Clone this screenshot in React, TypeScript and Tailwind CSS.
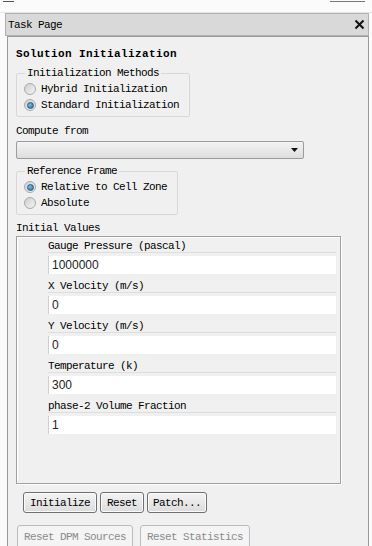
const mono = "font-['Liberation_Mono',monospace] text-[11px] leading-[12px] tracking-[-0.6px] text-black";

const Radio = ({ checked, label }: { checked?: boolean; label: string }) => (
    <div className="flex h-[16px] items-center gap-[5px] pl-[7px]">
        <span className="flex h-[12px] w-[12px] items-center justify-center rounded-full border border-[#a9a9a9] bg-[linear-gradient(135deg,#cfcfcf,#f4f4f4)]">
            {checked && (
                <span className="h-[7px] w-[7px] rounded-full border border-[#1f5f86] bg-[radial-gradient(circle_at_35%_35%,#7cc0e4,#1c6a9a)]" />
            )}
        </span>
        <span className={mono}>{label}</span>
    </div>
);

const Group = ({ title, width, children }: { title: string; width: string; children: React.ReactNode }) => (
    <fieldset className={`${width} rounded-[2px] border border-[#d8d8d8] pb-[3px] pt-[2px]`}>
        <legend className={`${mono} ml-[8px] px-[2px]`}>{title}</legend>
        {children}
    </fieldset>
);

const Field = ({ label, value }: { label: string; value: string }) => (
    <div className="flex flex-col">
        <div className={`${mono} h-[13px] border-b border-[#dedede]`}>{label}</div>
        <div className="mt-[3px] flex h-[18px] items-center border-l border-[#d0d0d0] bg-white pl-[3px] font-['Liberation_Sans',sans-serif] text-[12px] text-[#222]">
            {value}
        </div>
    </div>
);

const Btn = ({ text, width }: { text: string; width: string }) => (
    <button className={`${mono} ${width} h-[21px] rounded-[3px] border border-[#707070] bg-[linear-gradient(#f4f4f4,#dcdcdc)] shadow-[inset_0_0_0_1px_#fbfbfb]`}>
        {text}
    </button>
);

const DisabledBtn = ({ text, width }: { text: string; width: string }) => (
    <button className={`${mono} ${width} h-[24px] shrink-0 rounded-[3px] border border-[#b9bcbe] bg-[#f4f4f4] !text-[#8a8a8a]`}>
        {text}
    </button>
);

export default function App() {
    return (
        <div className="flex h-[546px] w-[372px] flex-col overflow-hidden bg-[#fbfbfb]">
            <div className="relative h-[13px] shrink-0 border-b border-[#e6e6e6]">
                <span className="absolute left-[3px] top-[1px] h-[1px] w-[11px] bg-[#555]" />
                <span className="absolute right-[7px] top-[1px] h-[1px] w-[35px] bg-[#777]" />
            </div>
            <div className="ml-[5px] flex w-[364px] flex-1 flex-col">
                <div className="flex h-[23px] shrink-0 items-center justify-between border border-[#b0b0b0] bg-[#d9d9d9] pl-[2px] pr-[3px]">
                    <span className={mono}>Task Page</span>
                    <svg width="11" height="11" viewBox="0 0 11 11">
                        <path d="M1.5 1.5 L9.5 9.5 M9.5 1.5 L1.5 9.5" stroke="#111" strokeWidth="2" />
                    </svg>
                </div>
                <div className="ml-[2px] flex flex-1 flex-col border-x border-t border-[#9a9a9a] bg-[#f0f0f0] pl-[8px] pt-[11px]">
                    <div className={`${mono} shrink-0 font-bold tracking-[0.4px]`}>Solution Initialization</div>
                    <div className="mt-[7px] shrink-0">
                        <Group title="Initialization Methods" width="w-[174px]">
                            <Radio label="Hybrid  Initialization" />
                            <Radio checked label="Standard Initialization" />
                        </Group>
                    </div>
                    <div className={`${mono} mt-[8px] shrink-0`}>Compute from</div>
                    <div className="mt-[4px] flex h-[18px] w-[288px] shrink-0 items-center justify-end rounded-[2px] border border-[#9c9c9c] bg-[linear-gradient(#f3f3f3,#dedede)] pr-[5px]">
                        <svg width="7" height="4" viewBox="0 0 7 4">
                            <path d="M0 0 H7 L3.5 4 Z" fill="#111" />
                        </svg>
                    </div>
                    <div className="mt-[6px] shrink-0">
                        <Group title="Reference Frame" width="w-[162px]">
                            <Radio checked label="Relative to Cell Zone" />
                            <Radio label="Absolute" />
                        </Group>
                    </div>
                    <div className={`${mono} mt-[7px] shrink-0`}>Initial Values</div>
                    <div className="mt-[2px] flex h-[248px] w-[325px] shrink-0 flex-col gap-[6px] border border-[#a0a0a0] pl-[31px] pr-[4px] pt-[3px] shadow-[inset_1px_1px_0_#ffffff,1px_1px_0_#ffffff]">
                        <Field label="Gauge Pressure (pascal)" value="1000000" />
                        <Field label="X Velocity (m/s)" value="0" />
                        <Field label="Y Velocity (m/s)" value="0" />
                        <Field label="Temperature (k)" value="300" />
                        <Field label="phase-2 Volume Fraction" value="1" />
                    </div>
                    <div className="mt-[8px] flex shrink-0 gap-[3px] pl-[7px]">
                        <Btn text="Initialize" width="w-[74px]" />
                        <Btn text="Reset" width="w-[44px]" />
                        <Btn text="Patch..." width="w-[60px]" />
                    </div>
                    <div className="mt-[12px] flex shrink-0 gap-[7px] pl-[1px]">
                        <DisabledBtn text="Reset DPM Sources" width="w-[116px]" />
                        <DisabledBtn text="Reset Statistics" width="w-[110px]" />
                    </div>
                </div>
            </div>
        </div>
    );
}
